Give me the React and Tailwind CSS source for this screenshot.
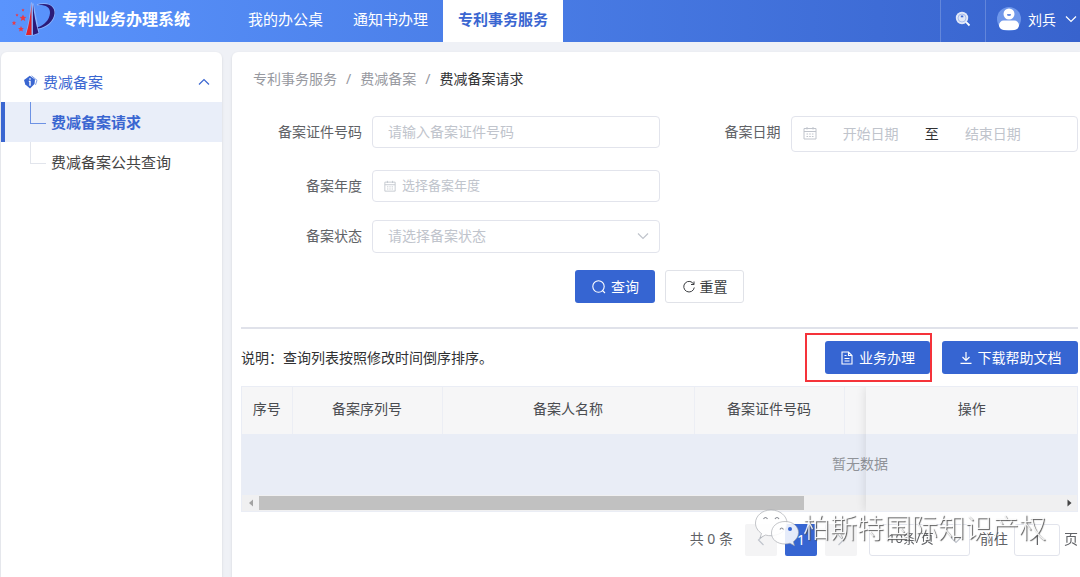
import React, { useState } from 'react';

const navItems = ['我的办公桌', '通知书办理', '专利事务服务'];

const columns = [
  { title: '序号', width: 'w-[50px]' },
  { title: '备案序列号', width: 'w-[150px]' },
  { title: '备案人名称', width: 'w-[252px]' },
  { title: '备案证件号码', width: 'w-[150px]' },
  { title: '', width: '' },
];

// x, y, size of the stars left of the logo mark
const stars = [
  [12, 16, 3.4],
  [3, 21, 2.3],
  [10, 27, 2.9],
  [6, 13, 1.6],
  [12, 8, 1.6],
];

const Chevron = ({ className, up }) => (
  <svg viewBox="0 0 12 8" className={className} fill="none" stroke="currentColor" strokeWidth="1.2">
    <path d={up ? 'M1 6.500 6 1.500l5 5' : 'M1 1.500l5 5 5-5'} />
  </svg>
);

const CalendarIcon = ({ className }) => (
  <svg viewBox="0 0 14 14" className={className} fill="none" stroke="currentColor">
    <path d="M1 2.500h12v10.500H1zM1 5.500h12M4 1v2.500M10 1v2.500" />
    <path d="M3.500 8h7M3.500 10.500h7" strokeDasharray="1.600 1.100" />
  </svg>
);

const Logo = () => (
  <svg viewBox="0 0 44 34" className="h-[34px] w-11 shrink-0">
    <g fill="none" stroke="#fff" strokeOpacity="0.3" strokeWidth="1.500" strokeLinejoin="round">
      <path d="M20.500 1v32H15Q19.500 18 20.500 1z" />
      <path d="M22 2l5.500 29-5.500 2z" />
      <path d="M26 3c9-3 17.500 0 17.500 8 0 8-8 14.500-16.500 15.500" />
    </g>
    <path fill="#e0242c" d="M20.500 1v32H15Q19.500 18 20.500 1z" />
    <path fill="#2b1a78" d="M22 2q1.500 16 5.500 29l-5.500 2z" />
    <path fill="#2b1a78" d="M26 3.200c9-3.200 18-.2 17.500 8C43 19 35 25.500 27 26.500l-.3-1.200C33 23.500 38.500 18 39 11c.3-6-5-8.500-13-7.800z" />
    {stars.map(([x, y, r]) => (
      <path
        key={`${x}-${y}`}
        transform={`translate(${x} ${y}) scale(${r})`}
        fill="#ea3a45"
        d="M0-1l.3.650.7.050-.550.450.2.750L0 .5l-.65.400.2-.75L-1-.3l.7-.05z"
      />
    ))}
  </svg>
);

const Header = () => (
  <header className="flex h-[42px] items-stretch bg-linear-to-r from-[#5a94fd] to-[#3863cd] text-white">
    <div className="flex w-[233px] shrink-0 items-center gap-[7px] pb-1 pl-[11px]">
      <Logo />
      <h1 className="text-[16px] font-bold whitespace-nowrap">专利业务办理系统</h1>
    </div>
    <nav className="flex flex-1">
      {navItems.map((item) => (
        <a
          key={item}
          href="#"
          className={
            item === '专利事务服务'
              ? 'flex items-center bg-white px-[15px] pb-1 text-[15px] font-bold whitespace-nowrap text-[#3a66d1]'
              : 'flex items-center px-[15px] pb-1 text-[15px] whitespace-nowrap'
          }
        >
          {item}
        </a>
      ))}
    </nav>
    <button aria-label="搜索" className="flex w-[46px] items-center justify-center border-x border-white/20 pb-1">
      <svg viewBox="0 0 16 16" className="h-4 w-4">
        <circle cx="7" cy="7" r="6.200" fill="#fff" fillOpacity="0.85" />
        <circle cx="7" cy="7" r="4" fill="none" stroke="#3f6cd6" strokeOpacity="0.35" />
        <path d="M5.800 4.500h2.500v1.800H5.800z" fill="#3f6cd6" />
        <path d="M11.200 11.200l3.300 3.300" stroke="#fff" strokeWidth="1.800" />
      </svg>
    </button>
    <button className="flex items-center gap-[7px] pr-[3px] pb-1 pl-[11px] text-[14px]">
      <svg viewBox="0 0 24 24" className="h-6 w-6">
        <circle cx="12" cy="12" r="12" fill="#6f97ea" />
        <circle cx="12" cy="7" r="5.500" fill="#fff" />
        <rect x="2" y="13.500" width="20" height="9.500" rx="4.700" fill="#fff" />
        <path d="M10 7.300q2-.8 4 0v1q-2 1.400-4 0z" fill="#5c86e2" />
      </svg>
      <span>刘兵</span>
      <Chevron className="ml-0.5 h-2 w-3" />
    </button>
  </header>
);

const Sidebar = () => (
  <aside className="w-[221px] shrink-0 rounded-t-md bg-white shadow-sm">
    <button className="flex h-[50px] w-full items-center pt-2.5 pr-3 pl-[23px] text-[15px] text-[#3a66d1]">
      <svg viewBox="0 0 14 14" className="mr-[5px] h-3.5 w-3.5">
        <path d="M5.800.8L11 4.500l-.5 4.500L6 13.500 1.300 9.500 0 5z" fill="#3a66d1" />
        <path d="M7.500.8l5.500 4.500-1.500 4.500" fill="none" stroke="#7f9fe6" />
        <path d="M5.300 3.300h1.400v1.400H5.300zM4.800 5.800h1.900v5H5.300V7h-.5z" fill="#fff" />
      </svg>
      <span className="flex-1 text-left">费减备案</span>
      <Chevron up className="h-2 w-3" />
    </button>
    <ul className="text-[15px]">
      <li className="flex h-10 border-l-4 border-[#3a66d1] bg-[#e9eef9]">
        <span className="ml-[25px] h-[22px] w-4 border-b border-l border-[#6d92e4]"></span>
        <a href="#" className="ml-[5px] flex items-center font-bold text-[#3a66d1]">费减备案请求</a>
      </li>
      <li className="flex h-10 border-l-4 border-transparent">
        <span className="ml-[25px] h-[22px] w-4 border-b border-l border-[#e2e5ec]"></span>
        <a href="#" className="ml-[5px] flex items-center text-[#444]">费减备案公共查询</a>
      </li>
    </ul>
  </aside>
);

const SearchForm = () => {
  const [state, setState] = useState('');
  const label = 'w-[131px] shrink-0 pr-2.5 text-right leading-8 text-[#606266]';
  const box = 'min-w-0 flex-1 rounded border border-[#e2e4ec] bg-white placeholder:text-[#c0c4cc]';
  return (
    <form onSubmit={(e) => e.preventDefault()}>
      <div className="grid grid-cols-2 gap-y-[18px]">
        <div className="flex items-start">
          <label htmlFor="certNo" className={label}>备案证件号码</label>
          <input id="certNo" type="text" placeholder="请输入备案证件号码" className={`${box} h-8 px-[15px] pb-0.5`} />
        </div>
        <div className="flex items-start">
          <label htmlFor="startDate" className={label}>备案日期</label>
          <div className={`${box} flex h-9 items-center pr-[30px] pb-0.5 pl-[11px]`}>
            <CalendarIcon className="h-3.5 w-3.5 shrink-0 text-[#c0c4cc]" />
            <input id="startDate" type="text" placeholder="开始日期" className="min-w-0 flex-1 text-center placeholder:text-[#c0c4cc]" />
            <span className="text-[#303133]">至</span>
            <input aria-label="结束日期" type="text" placeholder="结束日期" className="min-w-0 flex-1 text-center placeholder:text-[#c0c4cc]" />
          </div>
        </div>
        <div className="col-start-1 flex items-start">
          <label htmlFor="year" className={label}>备案年度</label>
          <div className={`${box} flex h-8 items-center gap-1.5 px-[11px]`}>
            <CalendarIcon className="h-3 w-3 shrink-0 text-[#c0c4cc]" />
            <input id="year" type="text" placeholder="选择备案年度" className="min-w-0 flex-1 text-[13px] placeholder:text-[#c0c4cc]" />
          </div>
        </div>
        <div className="col-start-1 flex items-start">
          <label htmlFor="state" className={label}>备案状态</label>
          <div className="relative flex min-w-0 flex-1">
            <select
              id="state"
              value={state}
              onChange={(e) => setState(e.target.value)}
              className={`${box} h-[33px] appearance-none px-[15px] pb-0.5 text-[#c0c4cc]`}
            >
              <option value="">请选择备案状态</option>
            </select>
            <Chevron className="pointer-events-none absolute top-3 right-[11px] h-2 w-3 text-[#c0c4cc]" />
          </div>
        </div>
      </div>
      <div className="mt-[17px] flex justify-center gap-2.5">
        <button type="submit" className="flex h-[33px] w-20 items-center justify-center gap-1 rounded-[3px] bg-[#3665d2] text-white">
          <svg viewBox="0 0 16 16" className="h-4 w-4" fill="none" stroke="currentColor" strokeWidth="1.100">
            <circle cx="7.500" cy="7.500" r="5.700" />
            <path d="M11.500 11.500l2.500 2.500" />
          </svg>
          查询
        </button>
        <button type="reset" className="flex h-[33px] w-[79px] items-center justify-center gap-1 rounded-[3px] border border-[#e0e2e8] bg-white text-[#3c3e42]">
          <svg viewBox="0 0 14 14" className="h-3.5 w-3.5" fill="none" stroke="currentColor" strokeWidth="1">
            <path d="M11.800 4.300A5.300 5.300 0 1 0 12.300 7.500M12 1.500v3H9" />
          </svg>
          重置
        </button>
      </div>
    </form>
  );
};

const RecordTable = () => (
  <div className="relative mt-3 overflow-hidden border border-[#eaedf5]">
    <div className="overflow-hidden">
      <table className="w-full min-w-[1236px] table-fixed border-collapse">
        <thead>
          <tr className="h-[47px] bg-[#f6f6f7] text-[#4a4c50]">
            {columns.map((col, i) => (
              <th key={i} className={`${col.width} border-r border-[#eceef4] pb-1 font-normal`}>{col.title}</th>
            ))}
            <th className="sticky right-0 w-[211px] bg-[#f6f6f7] pb-1 font-normal">操作</th>
          </tr>
        </thead>
        <tbody>
          <tr className="h-[61px] bg-[#e9edf6]">
            <td colSpan={6} className="pb-0.5 text-center text-[#909399]">暂无数据</td>
          </tr>
        </tbody>
      </table>
    </div>
    <div className="flex h-4 items-center bg-[#f0f0f1]">
      <svg viewBox="0 0 17 16" className="h-4 w-[17px] shrink-0"><path d="M11 4.500v7L7 8z" fill="#a3a3a3" /></svg>
      <div className="flex-1"><div className="h-3.5 w-[68%] bg-[#c1c1c1]"></div></div>
      <svg viewBox="0 0 17 16" className="h-4 w-[17px] shrink-0"><path d="M7.500 4.500v7l4-3.500z" fill="#444" /></svg>
    </div>
    {/* shadow of the fixed column */}
    <div className="pointer-events-none absolute inset-y-0 right-0 w-[211px] shadow-[0_0_10px_rgba(0,0,0,0.12)]"></div>
  </div>
);

const Watermark = () => (
  <div className="pointer-events-none absolute -top-[15px] right-8 flex items-center gap-[3px]">
    <svg viewBox="0 0 46 38" className="h-[38px] w-[46px]">
      <g stroke="#9a9da4" strokeWidth="0.600">
        <path fill="#fff" fillOpacity="0.9" d="M17 1C8 1 1.500 7 1.500 14c0 4.500 2.500 8 6 10.500L6 29l5.500-3c2 .6 4 .8 6 .7C28 26 33 20 33 14 33 7 26 1 17 1z" />
        <path fill="#fff" fillOpacity="0.88" d="M31 12.500c-8 0-13.500 5-13.500 11.500S23 35 31 35c1.800 0 3.500-.3 5-.8l4.500 2.500-1.200-4c3-2.200 5.200-5.500 5.200-9.200 0-6-5.500-11-13.500-11z" />
      </g>
      <path d="M9.500 10q2-3 4 0M21 10q2-3 4 0" fill="none" stroke="#8a8d94" strokeWidth="1.200" />
      <path d="M26 20.500q1.500-3 3.500 0" fill="none" stroke="#8a8d94" strokeWidth="1.200" />
      <circle cx="36" cy="20" r="2" fill="#3665d2" />
    </svg>
    <span className="text-[27px] leading-9 font-light whitespace-nowrap text-white/90 [text-shadow:1px_1px_1px_#555]">
      柏斯特国际知识产权
    </span>
  </div>
);

const Pagination = () => (
  <div className="relative mt-3 flex h-8 items-center justify-end text-[14px] text-[#606266]">
    <span className="mr-3 pb-1">共 0 条</span>
    <button aria-label="上一页" className="mr-2 flex h-8 w-8 items-center justify-center rounded-xs bg-[#f4f4f5] text-[#c0c4cc]">
      <Chevron className="h-2 w-3 rotate-90" />
    </button>
    <button className="mr-2 h-8 w-8 rounded-xs bg-[#3665d2] pb-0.5 text-white">1</button>
    <button aria-label="下一页" className="mr-3 flex h-8 w-8 items-center justify-center rounded-xs bg-[#f4f4f5] text-[#c0c4cc]">
      <Chevron className="h-2 w-3 -rotate-90" />
    </button>
    <div className="relative mr-2.5 flex">
      <select aria-label="每页条数" className="h-8 w-[101px] appearance-none rounded-[3px] border border-[#e2e4ec] bg-white pb-0.5 pl-[18px] text-[13px]">
        <option>10条/页</option>
      </select>
      <Chevron className="pointer-events-none absolute top-3 right-2 h-2 w-3 text-[#c0c4cc]" />
    </div>
    <label htmlFor="page" className="mr-1.5 pb-1">前往</label>
    <input id="page" type="text" defaultValue="1" className="mr-1 h-8 w-[46px] rounded-[3px] border border-[#e2e4ec] bg-white pb-0.5 text-center" />
    <span className="pb-1">页</span>
    <Watermark />
  </div>
);

const App = () => {
  return (
    <div className="flex min-h-screen flex-col bg-[#eff1f6] font-['Noto_Sans','Noto_Sans_CJK_SC',sans-serif]">
      <Header />
      <div className="flex flex-1 gap-2.5 pt-2.5 pl-px">
        <Sidebar />
        <main className="min-w-0 flex-1 rounded-tl-md bg-white pr-0.5 pl-[9px] text-[14px] shadow-sm">
          <div className="flex h-16 items-start gap-[9px] pt-[17px] pl-3 leading-5 text-[#97999f]">
            <a href="#">专利事务服务</a>
            <span>/</span>
            <a href="#">费减备案</a>
            <span>/</span>
            <span className="text-[#303133]">费减备案请求</span>
          </div>
          <SearchForm />
          <hr className="mt-6 border-t-2 border-[#e0e2ea]" />
          <div className="mt-3 flex items-center">
            <p className="flex-1 text-[#303133]">说明：查询列表按照修改时间倒序排序。</p>
            <div className="relative mr-3">
              <button className="flex h-[33px] w-[105px] items-center justify-center gap-[5px] rounded-[3px] bg-[#3665d2] text-white">
                <svg viewBox="0 0 14 14" className="h-3.5 w-3.5" fill="none" stroke="currentColor" strokeWidth="1.100">
                  <path d="M2 1h6.500L12 4.500V13H2zM8.500 1v3.500H12M4.500 4.500h2M4.500 7.500h5M4.500 10h5" />
                </svg>
                业务办理
              </button>
              <div className="pointer-events-none absolute -top-2 -right-0.5 -bottom-2 -left-5 border-2 border-[#f5333a]"></div>
            </div>
            <button className="flex h-[33px] w-[136px] items-center justify-center gap-[5px] rounded-[3px] bg-[#3665d2] text-white">
              <svg viewBox="0 0 14 14" className="h-3.5 w-3.5" fill="none" stroke="currentColor" strokeWidth="1.200">
                <path d="M7 1v8.500M3.500 6L7 9.500 10.500 6M1.500 12.300h11" />
              </svg>
              下载帮助文档
            </button>
          </div>
          <RecordTable />
          <Pagination />
        </main>
      </div>
    </div>
  );
};

export default App;
